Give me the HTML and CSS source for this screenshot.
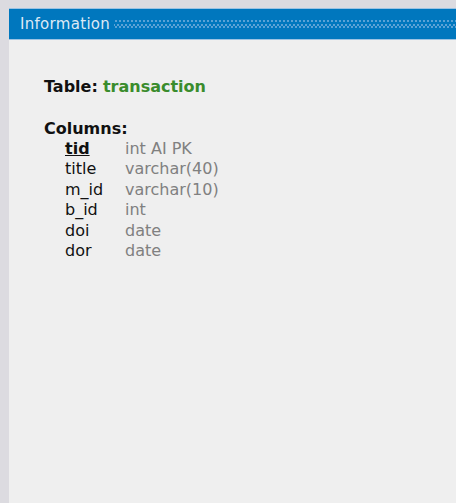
FILE: index.html
```html
<!DOCTYPE html>
<html>
<head>
<meta charset="utf-8">
<link rel="stylesheet" href="styles.css">
</head>
<body>
<div class="panel">
  <div class="header">
    <span class="title">Information</span>
    <span class="dots"></span>
  </div>
  <div class="content">
    <div class="table-line"><b>Table:</b> <b class="tname">transaction</b></div>
    <div class="cols-label">Columns:</div>
    <div class="cols">
      <span class="cname pk">tid</span><span class="ctype">int AI PK</span>
      <span class="cname">title</span><span class="ctype">varchar(40)</span>
      <span class="cname">m_id</span><span class="ctype">varchar(10)</span>
      <span class="cname">b_id</span><span class="ctype">int</span>
      <span class="cname">doi</span><span class="ctype">date</span>
      <span class="cname">dor</span><span class="ctype">date</span>
    </div>
  </div>
</div>
</body>
</html>
```

FILE: styles.css
```css
html, body {
  margin: 0;
  padding: 0;
  height: 100%;
}
body {
  background: #dcdbe0;
  font-family: "DejaVu Sans", sans-serif;
  padding: 8px 0 0 9px;
  box-sizing: border-box;
}
.panel {
  height: 100%;
  background: #efefef;
  display: flex;
  flex-direction: column;
}
.header {
  height: 30px;
  background: #0077be;
  border-top: 1px solid #9cc3e3;
  border-bottom: 1px solid #9cc3e3;
  display: flex;
  align-items: center;
  padding-left: 11px;
}
.title {
  color: #dde9f5;
  font-size: 15px;
  letter-spacing: 0.3px;
}
.dots {
  flex: 1;
  height: 8px;
  margin-left: 4px;
  background-image:
    radial-gradient(circle, #5aa2d6 0.9px, transparent 1.2px),
    radial-gradient(circle, #5aa2d6 0.9px, transparent 1.2px);
  background-size: 4px 6px, 4px 6px;
  background-position: 0 -2px, 2px 2px;
}
.content {
  padding: 37px 0 0 35px;
  color: #111;
  font-size: 16px;
}
.table-line {
  line-height: 20px;
}
.tname {
  color: #3a8c2c;
}
.cols-label {
  font-weight: bold;
  margin-top: 23px;
  line-height: 18px;
}
.cols {
  display: grid;
  grid-template-columns: 60px auto;
  padding-left: 21px;
  padding-top: 1px;
  line-height: 20.4px;
}
.cname {
  color: #111;
}
.pk {
  font-weight: bold;
  text-decoration: underline;
}
.ctype {
  color: #808080;
}
```
